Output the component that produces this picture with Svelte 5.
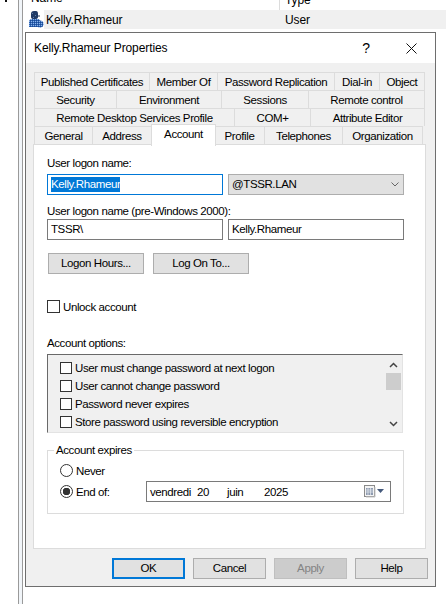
<script>
  const tabRows = [
    [["Published Certificates", 116], ["Member Of", 68], ["Password Replication", 117], ["Dial-in", 45], ["Object", 45]],
    [["Security", 83], ["Environment", 105], ["Sessions", 87], ["Remote control", 116]],
    [["Remote Desktop Services Profile", 201], ["COM+", 76], ["Attribute Editor", 114]],
    [["General", 59], ["Address", 59], ["Account", 65], ["Profile", 50], ["Telephones", 78], ["Organization", 80]],
  ];
  const options = [
    "User must change password at next logon",
    "User cannot change password",
    "Password never expires",
    "Store password using reversible encryption",
  ];
  const buttons = ["OK", "Cancel", "Apply", "Help"];
</script>

<div class="page">
  <div class="gutter"><span class="dot"></span></div>
  <div class="rail"></div>
  <div class="content">
    <div class="list-head">
      <span class="col-name">Name</span>
      <span class="col-type">Type</span>
    </div>
    <div class="list-row">
      <svg class="user-icon" width="15" height="17" viewBox="0 0 15 17">
        <defs>
          <pattern id="dither" width="2" height="2" patternUnits="userSpaceOnUse">
            <rect width="2" height="2" fill="#2a62b4" />
            <rect width="1" height="1" fill="#8fb4e6" />
            <rect x="1" y="1" width="1" height="1" fill="#1d4a92" />
          </pattern>
        </defs>
        <path d="M2 3Q2 0 5 0H7Q9 0 9 3V6Q9 8 6 8H5Q2 8 2 6Z" fill="#1f3a66" />
        <path d="M3 2h1v1H3zM6 4h1v1H6zM4 6h1v1H4z" fill="#5f7fae" />
        <path d="M9 4h2v2H9z" fill="#8d97a6" />
        <path d="M0 16V11Q0 8 3 8H9Q11 8 11 10V16Z" fill="url(#dither)" />
        <circle cx="11" cy="13" r="3.500" fill="url(#dither)" />
      </svg>
      <div class="row-fill">
        <span class="row-name">Kelly.Rhameur</span>
        <span class="row-type">User</span>
      </div>
    </div>

    <div class="dialog">
      <div class="titlebar">
        <span class="title">Kelly.Rhameur Properties</span>
        <span class="help-mark">?</span>
        <svg class="close" width="11" height="11" viewBox="0 0 11 11">
          <path d="M0.500 0.500L10.500 10.500M10.500 0.500L0.500 10.500" stroke="#111" stroke-width="1" fill="none" />
        </svg>
      </div>

      <div class="body">
        <div class="tabs">
          {#each tabRows as row}
            <div class="tab-row">
              {#each row as [label, width]}
                <div class="tab" class:active={label === "Account"} style="width: {width}px">{label}</div>
              {/each}
            </div>
          {/each}
        </div>

        <div class="panel">
          <div class="label first">User logon name:</div>
          <div class="fields">
            <div class="field focused"><span class="selected">Kelly.Rhameur</span></div>
            <div class="field combo">
              <span>@TSSR.LAN</span>
              <svg width="8" height="5" viewBox="0 0 8 5">
                <path d="M0.500 0.500L4 4L7.500 0.500" stroke="#666" fill="none" />
              </svg>
            </div>
          </div>

          <div class="label second">User logon name (pre-Windows 2000):</div>
          <div class="fields tight">
            <div class="field">TSSR\</div>
            <div class="field">Kelly.Rhameur</div>
          </div>

          <div class="logon-buttons">
            <div class="btn wide">Logon Hours...</div>
            <div class="btn wide">Log On To...</div>
          </div>

          <div class="check-row unlock">
            <span class="check big"></span>
            <span>Unlock account</span>
          </div>

          <div class="label options-label">Account options:</div>
          <div class="options">
            <div class="option-list">
              {#each options as option}
                <div class="check-row option">
                  <span class="check"></span>
                  <span>{option}</span>
                </div>
              {/each}
            </div>
            <div class="scrollbar">
              <svg width="9" height="6" viewBox="0 0 9 6">
                <path d="M1 5L4.500 1.500L8 5" stroke="#444" stroke-width="1.500" fill="none" />
              </svg>
              <div class="thumb"></div>
              <svg class="down" width="9" height="6" viewBox="0 0 9 6">
                <path d="M1 1L4.500 4.500L8 1" stroke="#444" stroke-width="1.500" fill="none" />
              </svg>
            </div>
          </div>

          <fieldset class="expires">
            <legend>Account expires</legend>
            <div class="radio-row">
              <span class="radio"></span>
              <span>Never</span>
            </div>
            <div class="radio-row end">
              <span class="radio on"></span>
              <span class="end-label">End of:</span>
              <div class="date">
                <span class="d-day">vendredi</span>
                <span class="d-num">20</span>
                <span class="d-month">juin</span>
                <span>2025</span>
                <svg class="cal" width="21" height="13" viewBox="0 0 21 13">
                  <rect x="0.500" y="0.500" width="10" height="11" fill="#f4f4f4" stroke="#8a8a8a" />
                  <path d="M2 3h7v7H2z" fill="#8f9bb0" />
                  <path d="M2 5h7M2 7h7M4 3v7M6.500 3v7" stroke="#e8ecf2" stroke-width="0.700" />
                  <path d="M11 2v10H2" stroke="#c4c4c4" fill="none" />
                  <path d="M13 4h7l-3.500 4z" fill="#44597c" />
                </svg>
              </div>
            </div>
          </fieldset>
        </div>

        <div class="actions">
          {#each buttons as b}
            <div class="btn action" class:default={b === "OK"} class:disabled={b === "Apply"}>{b}</div>
          {/each}
        </div>
      </div>
    </div>
  </div>
</div>

<style>
  :global(body) {
    background: #fff;
    overflow: hidden;
  }

  .page {
    display: flex;
    width: 446px;
    height: 604px;
    overflow: hidden;
    font-family: "Liberation Sans", Arial, sans-serif;
    font-size: 11.5px;
    letter-spacing: -0.4px;
    line-height: 14px;
    color: #000;
  }

  .gutter {
    width: 18px;
    flex: none;
  }

  .dot {
    display: block;
    width: 2px;
    height: 2px;
    margin-left: 5px;
    background: #111;
  }

  .rail {
    width: 3px;
    flex: none;
    border-left: 1px solid #9a9a9a;
    border-right: 1px solid #9a9a9a;
    background: #f1f5f9;
  }

  .content {
    flex: 1;
    min-width: 0;
  }

  .list-head {
    position: relative;
    height: 10px;
    overflow: hidden;
    display: flex;
    font-size: 12px;
    letter-spacing: -0.1px;
  }

  .col-name {
    margin: -9px 0 0 8px;
    width: 248px;
    flex: none;
  }

  .col-type {
    margin-top: -9px;
    padding: 9px 0 0 5px;
    line-height: 0;
    border-left: 1px solid #dcdcdc;
  }

  .list-row {
    display: flex;
    height: 19px;
    padding-left: 6px;
    align-items: center;
    font-size: 12px;
    letter-spacing: -0.1px;
  }

  .user-icon {
    flex: none;
  }

  .row-fill {
    flex: 1;
    display: flex;
    align-items: center;
    height: 19px;
    background: #f0f0f0;
    padding-left: 2px;
  }

  .row-name {
    width: 239px;
    flex: none;
  }

  .dialog {
    width: 409px;
    height: 553px;
    margin: 3px 0 0 2px;
    border: 1px solid #6e6e6e;
    display: flex;
    flex-direction: column;
    background: #f0f0f0;
  }

  .titlebar {
    height: 30px;
    flex: none;
    background: #fff;
    display: flex;
    align-items: center;
    padding-left: 8px;
    position: relative;
    font-size: 12px;
    letter-spacing: -0.1px;
  }

  .title {
    flex: 1;
  }

  .help-mark {
    font-size: 14px;
    margin-right: 36px;
  }

  .close {
    margin-right: 18px;
  }

  .body {
    flex: 1;
    min-height: 0;
  }

  .tabs {
    margin: 9px 0 0 8px;
    position: relative;
  }

  .tab-row {
    display: flex;
    height: 18px;
  }

  .tab {
    box-sizing: border-box;
    height: 18px;
    flex: none;
    text-align: center;
    line-height: 18px;
    white-space: nowrap;
    border: 1px solid #dcdcdc;
    border-left-width: 0;
    border-bottom-width: 0;
    background: #f0f0f0;
  }

  .tab:first-child {
    border-left-width: 1px;
  }

  .tab.active {
    position: relative;
    z-index: 2;
    height: 22px;
    margin-top: -2px;
    padding-top: 0;
    background: #fff;
    border-left-width: 1px;
    margin-left: -1px;
    margin-right: -1px;
    width: 67px;
    line-height: 19px;
  }

  .panel {
    box-sizing: border-box;
    width: 393px;
    height: 405px;
    margin-left: 7px;
    padding: 0 0 0 13px;
    background: #fff;
    border: 1px solid #dcdcdc;
  }

  .label.first {
    margin-top: 11px;
  }

  .label.second {
    margin-top: 9px;
  }

  .fields {
    display: flex;
    gap: 5px;
    margin-top: 4px;
  }

  .fields.tight {
    margin-top: 1px;
  }

  .field {
    box-sizing: border-box;
    width: 176px;
    height: 21px;
    padding: 2px 3px;
    line-height: 15px;
    background: #fff;
    border: 1px solid #7a7a7a;
  }

  .field.focused {
    border-color: #0078d7;
  }

  .selected {
    display: inline-block;
    background: #0078d7;
    color: #fff;
  }

  .field.combo {
    display: flex;
    justify-content: space-between;
    align-items: center;
    background: #e1e1e1;
    border-color: #adadad;
    padding-right: 4px;
  }

  .btn {
    box-sizing: border-box;
    height: 21px;
    line-height: 19px;
    text-align: center;
    background: #e1e1e1;
    border: 1px solid #adadad;
  }

  .logon-buttons {
    display: flex;
    gap: 9px;
    margin: 13px 0 0 1px;
  }

  .btn.wide {
    width: 96px;
  }

  .check-row {
    display: flex;
    align-items: center;
    gap: 3px;
  }

  .unlock {
    margin-top: 26px;
    height: 13px;
  }

  .check {
    box-sizing: border-box;
    width: 12px;
    height: 12px;
    flex: none;
    background: #fff;
    border: 1px solid #333;
  }

  .check.big {
    width: 13px;
    height: 13px;
  }

  .label.options-label {
    margin-top: 23px;
  }

  .options {
    box-sizing: border-box;
    display: flex;
    justify-content: space-between;
    width: 356px;
    height: 79px;
    margin-top: 4px;
    background: #f0f0f0;
    border: 1px solid #e3e3e3;
    border-top: 1px solid #696969;
    border-left: 1px solid #696969;
  }

  .option-list {
    padding: 7px 0 0 12px;
  }

  .option {
    height: 12px;
    margin-bottom: 6px;
    white-space: nowrap;
  }

  .scrollbar {
    width: 15px;
    margin-right: 1px;
    display: flex;
    flex-direction: column;
    align-items: center;
    padding-top: 7px;
  }

  .thumb {
    width: 15px;
    height: 17px;
    margin-top: 5px;
    background: #cdcdcd;
  }

  .down {
    margin-top: auto;
    margin-bottom: 5px;
  }

  .expires {
    box-sizing: border-box;
    width: 357px;
    height: 71px;
    margin: 10px 0 0;
    padding: 7px 0 0 12px;
    min-width: 0;
    border: 1px solid #dcdcdc;
  }

  legend {
    margin-left: -6px;
    padding: 0 2px;
    line-height: 14px;
  }

  .radio-row {
    display: flex;
    align-items: center;
    gap: 3px;
    height: 13px;
  }

  .radio-row.end {
    margin-top: 8px;
  }

  .radio {
    box-sizing: border-box;
    width: 13px;
    height: 13px;
    flex: none;
    border: 1px solid #333;
    border-radius: 50%;
    background: #fff;
  }

  .radio.on {
    background: radial-gradient(circle, #333 0, #333 3.5px, #fff 4px);
  }

  .end-label {
    width: 67px;
    flex: none;
  }

  .date {
    box-sizing: border-box;
    display: flex;
    align-items: center;
    width: 245px;
    height: 21px;
    flex: none;
    padding-left: 3px;
    border: 1px solid #7a7a7a;
    background: #fff;
  }

  .d-day {
    width: 47px;
  }

  .d-num {
    width: 30px;
  }

  .d-month {
    width: 37px;
  }

  .cal {
    margin-left: auto;
    margin-right: 5px;
  }

  .actions {
    display: flex;
    justify-content: flex-end;
    gap: 8px;
    margin: 9px 7px 0 0;
  }

  .btn.action {
    width: 73px;
  }

  .btn.default {
    border: 2px solid #0078d7;
    line-height: 17px;
  }

  .btn.disabled {
    background: #cccccc;
    border-color: #bfbfbf;
    color: #838383;
  }
</style>
